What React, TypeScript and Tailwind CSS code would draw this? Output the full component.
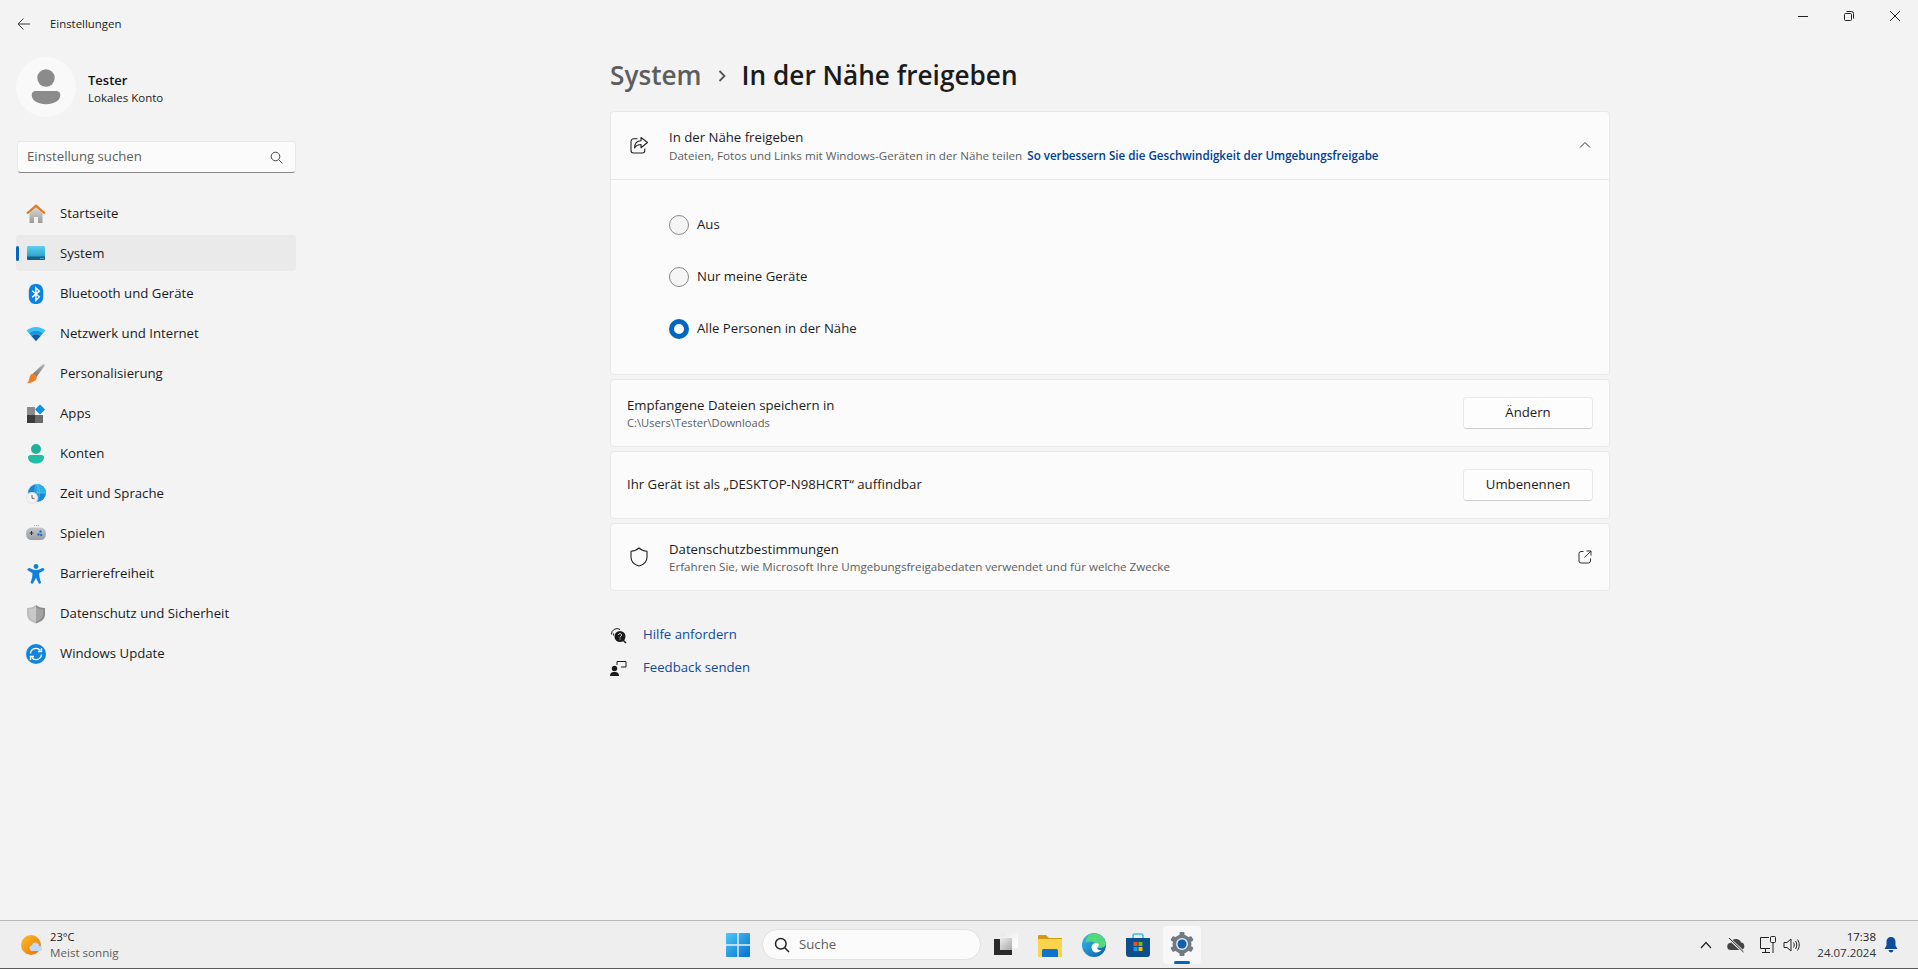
import { type ReactNode } from "react";

const Ico = ({ size = 20, children }: { size?: number; children: ReactNode }) => (
  <svg width={size} height={size} viewBox="0 0 20 20" fill="none" className="shrink-0">
    {children}
  </svg>
);

const HomeIcon = () => (
  <Ico>
    <defs>
      <linearGradient id="home" x1="0" y1="0" x2="0" y2="1">
        <stop offset="0" stopColor="#d8d8d8" />
        <stop offset="1" stopColor="#9a9a9a" />
      </linearGradient>
    </defs>
    <path d="M3.5 9 10 3.5 16.5 9v10H12v-6H8v6H3.5Z" fill="url(#home)" />
    <path d="M1 9.5 10 1.8l9 7.7" stroke="#e07a1f" strokeWidth="2.2" strokeLinejoin="miter" />
  </Ico>
);

const SystemIcon = () => (
  <Ico>
    <defs>
      <linearGradient id="sys" x1="0" y1="0" x2="0" y2="1">
        <stop offset="0" stopColor="#5cd0ee" />
        <stop offset="1" stopColor="#1b93bd" />
      </linearGradient>
    </defs>
    <rect x="1" y="2" width="18" height="14" rx="1.2" fill="url(#sys)" />
    <path d="M1 12.5h18v2.3a1.2 1.2 0 0 1-1.2 1.2H2.2A1.2 1.2 0 0 1 1 14.8Z" fill="#10628c" />
    <rect x="14.5" y="14" width="1" height="1" fill="#9fdcf0" />
    <rect x="16.5" y="14" width="1" height="1" fill="#9fdcf0" />
  </Ico>
);

const BluetoothIcon = () => (
  <Ico>
    <path d="M10 0c4.6 0 7.2 2.6 7.2 7.5v5c0 4.900-2.600 7.500-7.200 7.500s-7.200-2.600-7.200-7.500v-5C2.800 2.600 5.400 0 10 0Z" fill="#0a84e4" />
    <path d="m6.300 6.800 7 6-3.400 3.400V3.800l3.400 3.300-7 6" stroke="#fff" strokeWidth="1.4" />
  </Ico>
);

const WifiIcon = () => (
  <Ico>
    <path d="M.5 6.500C5.800 1.700 14.200 1.700 19.500 6.500L17 9.300C12.800 5.700 7.200 5.700 3 9.300Z" fill="#39c2f3" />
    <path d="M3 9.300c4.200-3.600 9.800-3.600 14 0l-2.400 2.700c-2.800-2.200-6.400-2.200-9.200 0Z" fill="#1296e6" />
    <path d="M5.400 12c2.800-2.200 6.400-2.200 9.200 0L10 17.200Z" fill="#0a5cac" />
  </Ico>
);

const BrushIcon = () => (
  <Ico>
    <defs>
      <linearGradient id="brush" x1="0" y1="1" x2="1" y2="0">
        <stop offset="0" stopColor="#6f6f6f" />
        <stop offset="1" stopColor="#b9b9b9" />
      </linearGradient>
    </defs>
    <path d="M7 9.500 17 .3c.9-.6 2.200.5 1.700 1.500L10.500 13Z" fill="url(#brush)" />
    <path d="M6.500 9.800c2 0 4 1.600 4.300 3.400.1 3.300-4.800 5.800-10.300 6 2.600-1.200 2.400-3.200 3.100-5.600.5-2 1.500-3.800 2.900-3.800Z" fill="#ef7e24" />
  </Ico>
);

const AppsIcon = () => (
  <Ico>
    <rect x="1" y="3" width="8" height="8" fill="#8a8a8a" />
    <rect x="1" y="11" width="8" height="8" fill="#3c3c3c" />
    <rect x="9" y="11" width="8" height="8" fill="#6a6a6a" />
    <path d="m14 .5 5 5-5 5-5-5Z" fill="#0c8fe6" />
  </Ico>
);

const AccountIcon = () => (
  <Ico>
    <circle cx="10" cy="5" r="5" fill="#21b09b" />
    <path d="M2 13.500c0-1.400 1-2.500 2.500-2.500h11c1.500 0 2.500 1.100 2.500 2.500 0 3.700-3.500 6-8 6s-8-2.300-8-6Z" fill="#1fbfa6" />
  </Ico>
);

const TimeIcon = () => (
  <Ico>
    <circle cx="11" cy="9" r="9" fill="#1489d8" />
    <path d="M11 0a9 9 0 0 1 9 9h-9Z" fill="#28aee8" />
    <path d="M2 9h18M11 0v18M11 0c-3 3-3 15 0 18M11 0c3 3 3 15 0 18" stroke="#73cdf2" strokeWidth=".6" />
    <circle cx="6" cy="14" r="6" fill="#e4e4e4" />
    <circle cx="6" cy="14" r="4.8" fill="#f4f4f4" />
    <path d="M6 11v3.300h2.500" stroke="#555" strokeWidth=".9" />
  </Ico>
);

const GameIcon = () => (
  <Ico>
    <defs>
      <linearGradient id="pad" x1="0" y1="0" x2="0" y2="1">
        <stop offset="0" stopColor="#c3c7cc" />
        <stop offset="1" stopColor="#9b9fa5" />
      </linearGradient>
    </defs>
    <rect x="0" y="3.5" width="20" height="12.5" rx="5.5" fill="url(#pad)" />
    <path d="M3.500 9h4M5.500 7v4" stroke="#333" strokeWidth="1" />
    <circle cx="14.5" cy="7.5" r="1.2" fill="#1d6fc4" />
    <circle cx="12.5" cy="10.5" r="1.2" fill="#1d6fc4" />
    <circle cx="15.2" cy="11" r="1.2" fill="#1d6fc4" />
    <path d="M8 1.500h.8M10.200 1.500h.8M12.200 1.500h.8" stroke="#8a8a8a" strokeWidth=".9" />
  </Ico>
);

const AccessIcon = () => (
  <Ico>
    <circle cx="10" cy="2.5" r="2.4" fill="#1180dc" />
    <path d="M2 4.500c.8-.8 1.500-.7 2.200-.2 3.400 2.400 8.200 2.400 11.600 0 .7-.5 1.400-.6 2.200.2.600.7.400 1.500-.3 2-1.700 1.300-3.400 2-4.400 2.400-.2 3.400.6 6.500 1.700 9.300.4 1.300-1.500 2.200-2.300 1L10 13.900 7 19.200c-.8 1.200-2.700.3-2.300-1 1.100-2.800 1.900-5.900 1.700-9.300-1-.4-2.700-1.100-4.400-2.400-.7-.5-.9-1.300 0-2Z" fill="#1180dc" />
  </Ico>
);

const ShieldIcon = () => (
  <Ico>
    <path d="M10 1C7.500 3 5 3.800 1 4v6.500C1 15 5 18 10 19.500Z" fill="#bcbcbc" />
    <path d="M10 1c2.500 2 5 2.800 9 3v6.500C19 15 15 18 10 19.500Z" fill="#8c8c8c" />
    <path d="M10 3C8 4.500 5.800 5.300 3 5.500v5c0 3.400 2.800 5.800 7 7.200 4.200-1.400 7-3.800 7-7.200v-5C14.200 5.300 12 4.500 10 3Z" fill="#fff" opacity=".2" />
  </Ico>
);

const UpdateIcon = () => (
  <Ico>
    <circle cx="10" cy="10" r="10" fill="#1284dc" />
    <path d="M4.500 9.500A5.500 5.500 0 0 1 14.300 6.500M15.500 10.500A5.500 5.500 0 0 1 5.700 13.500" stroke="#fff" strokeWidth="1.3" />
    <path d="M15.500 4v3.500H12M4.500 16v-3.500H8" stroke="#fff" strokeWidth="1.3" />
  </Ico>
);

const navItems = [
  { label: "Startseite", icon: <HomeIcon /> },
  { label: "System", icon: <SystemIcon />, active: true },
  { label: "Bluetooth und Geräte", icon: <BluetoothIcon /> },
  { label: "Netzwerk und Internet", icon: <WifiIcon /> },
  { label: "Personalisierung", icon: <BrushIcon /> },
  { label: "Apps", icon: <AppsIcon /> },
  { label: "Konten", icon: <AccountIcon /> },
  { label: "Zeit und Sprache", icon: <TimeIcon /> },
  { label: "Spielen", icon: <GameIcon /> },
  { label: "Barrierefreiheit", icon: <AccessIcon /> },
  { label: "Datenschutz und Sicherheit", icon: <ShieldIcon /> },
  { label: "Windows Update", icon: <UpdateIcon /> },
];

const Sidebar = () => (
  <aside className="w-[312px] shrink-0 pl-4 pr-4">
    <div className="flex h-12 items-center">
      <svg width="14" height="14" viewBox="0 0 14 14" fill="none" stroke="#3a3a3a" strokeWidth="1" className="ml-[1px]">
        <path d="M13 7H1M6.500 1.500 1 7l5.500 5.500" />
      </svg>
      <span className="ml-[19px] text-[11.4px] text-[#1b1b1b]">Einstellungen</span>
    </div>
    <div className="mt-[9px] flex h-[60px] items-center">
      <div className="flex h-[60px] w-[60px] items-center justify-center rounded-full bg-[#f9f9f9]">
        <svg width="30" height="36" viewBox="0 0 30 36" fill="#8b8b8b">
          <circle cx="15" cy="9" r="8.7" />
          <path d="M.700 26c0-2.400 1.800-4 4-4h20.600c2.200 0 4 1.600 4 4 0 5.800-6.500 9.200-14.300 9.200S.700 31.800.700 26Z" />
        </svg>
      </div>
      <div className="ml-3 mt-[2px] flex flex-col">
        <span className="text-[13px] font-semibold leading-[20px] text-[#111]">Tester</span>
        <span className="text-[11.5px] leading-[16px] text-[#1b1b1b]">Lokales Konto</span>
      </div>
    </div>
    <div className="ml-[1px] mt-6 flex h-8 w-[279px] items-center justify-between rounded-[4px] border border-[#e8e8e8] border-b-[#868686] bg-[#fbfbfb] pl-[9px] pr-[12px]">
      <span className="text-[13.2px] text-[#5d5d5d]">Einstellung suchen</span>
      <svg width="13" height="13" viewBox="0 0 13 13" fill="none" stroke="#444" strokeWidth="1">
        <circle cx="5.5" cy="5.5" r="4.3" />
        <path d="m8.600 8.600 3.800 3.800" />
      </svg>
    </div>
    <nav className="mt-[22px] flex flex-col gap-1">
      {navItems.map((item) => (
        <div
          key={item.label}
          className={`relative flex h-9 w-[280px] items-center rounded-[4px] pl-[10px] pt-[2px] ${item.active ? "bg-[#eaeaea]" : ""}`}
        >
          {item.active && <div className="absolute left-0 top-[11px] h-[15px] w-[3px] rounded-full bg-[#0067c0]" />}
          {item.icon}
          <span className="ml-[14px] text-[13.2px] text-[#1b1b1b]">{item.label}</span>
        </div>
      ))}
    </nav>
  </aside>
);

const Radio = ({ label, checked }: { label: string; checked?: boolean }) => (
  <div className="flex h-5 items-center">
    {checked ? (
      <div className="h-5 w-5 rounded-full border-[5px] border-[#0067c0] bg-white" />
    ) : (
      <div className="h-5 w-5 rounded-full border border-[#8a8a8a] bg-[#f5f5f5]" />
    )}
    <span className="ml-2 text-[13.2px] text-[#1b1b1b]">{label}</span>
  </div>
);

const Card = ({ children }: { children: ReactNode }) => (
  <div className="flex h-[68px] items-center justify-between rounded-[4px] border border-[#e8e8e8] bg-[#fbfbfb] pr-[16px]">
    {children}
  </div>
);

const ActionButton = ({ label }: { label: string }) => (
  <button className="h-8 w-[130px] rounded-[4px] border border-[#e8e8e8] border-b-[#cdcdcd] bg-[#fdfdfd] text-[13.2px] text-[#1b1b1b]">
    {label}
  </button>
);

const Content = () => (
  <main className="flex-1 pl-[298px]">
    <div className="w-[1000px]">
      <h1 className="flex h-[111px] items-center pt-[40px] text-[26.2px] font-semibold leading-none">
        <span className="text-[#5d5d5d]">System</span>
        <svg width="10" height="14" viewBox="0 0 10 14" fill="none" stroke="#555" strokeWidth="1.8" className="mx-[15px]">
          <path d="m2.500 2 5 5-5 5" />
        </svg>
        <span className="text-[#1b1b1b]">In der Nähe freigeben</span>
      </h1>

      <div className="flex flex-col gap-1">
        <div className="h-[264px] rounded-[4px] border border-[#e8e8e8] bg-[#fbfbfb]">
          <div className="flex h-[68px] items-center border-b border-[#e8e8e8] pb-[1px] pl-[18px] pr-[17px]">
            <svg width="20" height="20" viewBox="0 0 20 20" fill="none" stroke="#222" strokeWidth="1.1" className="shrink-0">
              <path d="M8.500 3.800H4.500A2.500 2.500 0 0 0 2 6.300v9.200A2.500 2.500 0 0 0 4.500 18h8.800a2.500 2.500 0 0 0 2.500-2.500V13.500" />
              <path d="M12 2.500v3.200C8 5.800 5.600 8.300 5.600 13c1.500-2.500 3.600-3.500 6.400-3.500v3.200L18.500 7.500Z" strokeLinejoin="round" />
            </svg>
            <div className="ml-[20px] flex flex-1 flex-col">
              <span className="text-[13.2px] leading-[20px] text-[#1b1b1b]">In der Nähe freigeben</span>
              <span className="text-[11.62px] leading-[17px] text-[#5d5d5d]">
                Dateien, Fotos und Links mit Windows-Geräten in der Nähe teilen
                <a className="ml-[5px] font-semibold text-[#003e92]">So verbessern Sie die Geschwindigkeit der Umgebungsfreigabe</a>
              </span>
            </div>
            <svg width="14" height="14" viewBox="0 0 14 14" fill="none" stroke="#333" strokeWidth="1">
              <path d="m2 9.500 5-5 5 5" />
            </svg>
          </div>
          <div className="flex flex-col gap-8 pl-[58px] pt-[35px]">
            <Radio label="Aus" />
            <Radio label="Nur meine Geräte" />
            <Radio label="Alle Personen in der Nähe" checked />
          </div>
        </div>

        <Card>
          <div className="flex flex-col pl-4">
            <span className="text-[13.2px] leading-[20px] text-[#1b1b1b]">Empfangene Dateien speichern in</span>
            <span className="text-[11.2px] leading-[16px] text-[#5d5d5d]">C:\Users\Tester\Downloads</span>
          </div>
          <ActionButton label="Ändern" />
        </Card>

        <Card>
          <span className="pl-4 text-[13.2px] text-[#1b1b1b]">Ihr Gerät ist als „DESKTOP-N98HCRT“ auffindbar</span>
          <ActionButton label="Umbenennen" />
        </Card>

        <Card>
          <div className="flex items-center pl-[18px]">
            <svg width="20" height="20" viewBox="0 0 20 20" fill="none" stroke="#222" strokeWidth="1.1" className="shrink-0">
              <path d="M10 1C8 3 5.500 4 2 4.200v6C2 14.500 5 17.500 10 19c5-1.500 8-4.500 8-8.800v-6C14.500 4 12 3 10 1Z" strokeLinejoin="round" />
            </svg>
            <div className="ml-[20px] flex flex-col">
              <span className="text-[13.2px] leading-[20px] text-[#1b1b1b]">Datenschutzbestimmungen</span>
              <span className="text-[11.62px] leading-[16px] text-[#5d5d5d]">
                Erfahren Sie, wie Microsoft Ihre Umgebungsfreigabedaten verwendet und für welche Zwecke
              </span>
            </div>
          </div>
          <svg width="14" height="14" viewBox="0 0 14 14" fill="none" stroke="#333" strokeWidth="1" className="mr-[1px]">
            <path d="M5.500 1.500H3A2 2 0 0 0 1 3.500v7.500a2 2 0 0 0 2 2h7.500a2 2 0 0 0 2-2V8.500M8.500 1H13v4.500M13 1 6.500 7.500" />
          </svg>
        </Card>
      </div>

      <div className="mt-[34px] flex flex-col gap-[13px]">
        <div className="flex h-5 items-center">
          <svg width="17" height="17" viewBox="0 0 17 17" className="shrink-0">
            <path d="M1.500 7.500A5.500 5.500 0 0 1 10 2.500M3.500 8.500v-2" fill="none" stroke="#1b1b1b" strokeWidth="1" />
            <circle cx="10" cy="9.5" r="5.5" fill="#1b1b1b" />
            <path d="m13 13 3 3" stroke="#1b1b1b" strokeWidth="1.5" />
            <path d="M8.500 8a1.500 1.500 0 1 1 2.300 1.300c-.6.400-.8.700-.8 1.200" fill="none" stroke="#fff" strokeWidth=".9" />
            <circle cx="10" cy="12" r=".6" fill="#fff" />
          </svg>
          <a className="ml-[16px] text-[13.2px] text-[#0f4a9c]">Hilfe anfordern</a>
        </div>
        <div className="flex h-5 items-center">
          <svg width="17" height="17" viewBox="0 0 17 17" className="shrink-0">
            <circle cx="4.5" cy="8.5" r="2.7" fill="#1b1b1b" />
            <path d="M0 16c0-2.500 1.500-4 3.500-4h2C7.500 12 9 13.500 9 16Z" fill="#1b1b1b" />
            <path d="M7 5V1.500h9V7h-5" fill="none" stroke="#1b1b1b" strokeWidth="1" />
          </svg>
          <a className="ml-[16px] text-[13.2px] text-[#0f4a9c]">Feedback senden</a>
        </div>
      </div>
    </div>
  </main>
);

const WindowControls = () => (
  <div className="absolute right-0 top-0 flex h-8 items-center">
    <div className="flex h-8 w-[46px] items-center justify-center">
      <svg width="10" height="10" viewBox="0 0 10 10" stroke="#222" strokeWidth="1"><path d="M0 5.500h10" /></svg>
    </div>
    <div className="flex h-8 w-[46px] items-center justify-center">
      <svg width="10" height="10" viewBox="0 0 10 10" fill="none" stroke="#222" strokeWidth="1">
        <rect x=".5" y="2.5" width="7" height="7" rx="1" />
        <path d="M2.500 .5h5a2 2 0 0 1 2 2v5" />
      </svg>
    </div>
    <div className="flex h-8 w-[46px] items-center justify-center">
      <svg width="10" height="10" viewBox="0 0 10 10" stroke="#222" strokeWidth="1"><path d="m0 0 10 10M10 0 0 10" /></svg>
    </div>
  </div>
);

const TaskbarCenter = () => (
  <div className="flex items-center">
    <svg width="24" height="24" viewBox="0 0 24 24" className="shrink-0">
      <defs>
        <linearGradient id="win" x1="0" y1="0" x2="1" y2="1">
          <stop offset="0" stopColor="#4cc8f8" />
          <stop offset="1" stopColor="#0670d0" />
        </linearGradient>
      </defs>
      <path d="M0 1a1 1 0 0 1 1-1h10.300v11.300H0ZM12.700 0H23a1 1 0 0 1 1 1v10.300H12.700ZM0 12.700h11.300V24H1a1 1 0 0 1-1-1ZM12.700 12.700H24V23a1 1 0 0 1-1 1H12.700Z" fill="url(#win)" />
    </svg>
    <div className="ml-[12px] flex h-[31px] w-[219px] items-center rounded-full border border-[#e2e2e2] bg-[#fbfbfb] pl-[11px]">
      <svg width="16" height="16" viewBox="0 0 16 16" fill="none" stroke="#222" strokeWidth="1.5">
        <circle cx="6.8" cy="6.8" r="5.3" />
        <path d="m10.700 10.700 4.300 4.300" />
      </svg>
      <span className="ml-[9px] text-[13.2px] text-[#5d5d5d]">Suche</span>
    </div>
    <svg width="24" height="24" viewBox="0 0 24 24" className="ml-[13px] shrink-0">
      <defs>
        <linearGradient id="tv1" x1="0" y1="0" x2="1" y2="1">
          <stop offset="0" stopColor="#e9e9e9" />
          <stop offset="1" stopColor="#ffffff" />
        </linearGradient>
        <linearGradient id="tv2" x1="0" y1="0" x2="1" y2="1">
          <stop offset="0" stopColor="#eeeeee" />
          <stop offset="1" stopColor="#a8a8a8" />
        </linearGradient>
      </defs>
      <rect x="7" y="0" width="17" height="15" fill="url(#tv1)" />
      <rect x="0" y="6" width="18" height="16" fill="#2a2a2a" />
      <rect x="6" y="5" width="12" height="12" fill="url(#tv2)" />
    </svg>
    <svg width="24" height="24" viewBox="0 0 24 24" className="ml-5 shrink-0">
      <path d="M0 3a1 1 0 0 1 1-1h7l3 3h13v4H0Z" fill="#d39a10" />
      <path d="M0 6h24v17a1 1 0 0 1-1 1H1a1 1 0 0 1-1-1Z" fill="#fbd34c" />
      <path d="M4 17.500a1.500 1.500 0 0 1 1.500-1.500h13a1.500 1.500 0 0 1 1.500 1.500V24H4Z" fill="#0f74c8" />
    </svg>
    <svg width="24" height="24" viewBox="0 0 24 24" className="ml-5 shrink-0">
      <defs>
        <linearGradient id="edge" x1="0" y1="0" x2="1" y2="1">
          <stop offset="0" stopColor="#35c1f1" />
          <stop offset="1" stopColor="#0c59a4" />
        </linearGradient>
      </defs>
      <circle cx="12" cy="12" r="12" fill="url(#edge)" />
      <path d="M7 2C11 -1 21 -.5 24 10c.3 3.500-3 5-6 5-2.500 0-4-.8-4.500-2.500C14 10 10 7 4 9.500 3.800 6 5 4 7 2Z" fill="#52d87d" />
      <path d="M9.500 14c0-3 3-4.500 5.500-4 2 .5 2.500 2.500 1 3.800-1.500 1.500-.5 3.600 3.500 3.200-3.500 3.800-9.500 3.500-10-3Z" fill="#fff" />
    </svg>
    <svg width="24" height="24" viewBox="0 0 24 24" className="ml-5 shrink-0">
      <path d="M7 6V3a2 2 0 0 1 2-2h6a2 2 0 0 1 2 2v3" fill="none" stroke="#38bdf0" strokeWidth="1.6" />
      <path d="M0 5h24v16a3 3 0 0 1-3 3H3a3 3 0 0 1-3-3Z" fill="#0d4f8a" />
      <rect x="7.5" y="9" width="4" height="4" fill="#f25022" />
      <rect x="12.5" y="9" width="4" height="4" fill="#7fba00" />
      <rect x="7.5" y="14" width="4" height="4" fill="#00a4ef" />
      <rect x="12.5" y="14" width="4" height="4" fill="#ffb900" />
    </svg>
    <div className="relative ml-[13px] flex h-[38px] w-[38px] items-center justify-center rounded-[4px] bg-[#f8f8f8]">
      <svg width="24" height="24" viewBox="0 0 24 24" className="-mt-[2px]">
        <g fill="#6f7a85">
          <rect x="9.5" y="0" width="5" height="24" rx="1" />
          <rect x="9.5" y="0" width="5" height="24" rx="1" transform="rotate(60 12 12)" />
          <rect x="9.5" y="0" width="5" height="24" rx="1" transform="rotate(120 12 12)" />
        </g>
        <circle cx="12" cy="12" r="9.5" fill="#6f7a85" />
        <circle cx="12" cy="12" r="6" fill="#dfe3e8" />
        <circle cx="12" cy="12" r="4.5" fill="#0f5fae" />
      </svg>
      <div className="absolute bottom-0 left-[11px] h-[3px] w-4 rounded-full bg-[#0067c0]" />
    </div>
  </div>
);

const Tray = () => (
  <div className="ml-auto flex items-center">
    <svg width="12" height="8" viewBox="0 0 12 8" fill="none" stroke="#222" strokeWidth="1.2">
      <path d="m1 7 5-5.500L11 7" />
    </svg>
    <svg width="18" height="16" viewBox="0 0 18 16" className="ml-[15px]">
      <path d="M4 13a3.500 3.500 0 0 1-.5-7C4 3.500 6.500 2 9 2s4.500 1.500 5 3.500a3.800 3.800 0 0 1 .3 7.500Z" fill="#444" />
      <path d="M2 1.500 16 14.500" stroke="#eee" strokeWidth="2.6" />
      <path d="M2 1 16.500 15" stroke="#222" strokeWidth="1" />
    </svg>
    <svg width="18" height="18" viewBox="0 0 18 18" fill="none" stroke="#222" strokeWidth="1" className="ml-[14px]">
      <path d="M10 1.500H1.500v11H11M6.500 12.500V16M3 16.500h8" />
      <rect x="11.5" y=".5" width="5" height="6" rx="1" />
      <path d="M14 7v10" />
    </svg>
    <svg width="17" height="16" viewBox="0 0 17 16" fill="none" stroke="#222" strokeWidth="1" className="ml-[6px]">
      <path d="M1 5.500h3L8 2v12l-4-3.500H1ZM10.500 5.500c1 1.500 1 3.500 0 5M12.500 4c1.700 2.500 1.700 5.500 0 8M14.500 2.500c2.300 3.300 2.300 7.700 0 11" />
    </svg>
    <div className="ml-[5px] flex w-[71px] flex-col items-end">
      <span className="text-[11.5px] leading-[16px] text-[#1b1b1b]">17:38</span>
      <span className="text-[11.5px] leading-[16px] text-[#333]">24.07.2024</span>
    </div>
    <svg width="14" height="16" viewBox="0 0 14 16" className="ml-[8px]">
      <path d="M7 0C4 0 2.500 2.300 2.500 5v3.500L.5 12h13l-2-3.500V5C11.500 2.300 10 0 7 0Z" fill="#0f4a9c" />
      <path d="M4.500 13h5a2.500 2.500 0 0 1-5 0Z" fill="#0f4a9c" />
    </svg>
  </div>
);

const Taskbar = () => (
  <footer className="flex h-[49px] shrink-0 items-center border-t border-b border-t-[#b9b9b9] border-b-[#5a5a5a] bg-[#eeeeee] pl-[21px] pr-[20px]">
    <div className="flex w-[705px] items-center">
      <svg width="20" height="20" viewBox="0 0 20 20" className="shrink-0 overflow-visible">
        <defs>
          <linearGradient id="sun" x1="0" y1="0" x2="1" y2="1">
            <stop offset="0" stopColor="#fbbf24" />
            <stop offset="1" stopColor="#e8700f" />
          </linearGradient>
        </defs>
        <circle cx="10" cy="10" r="10" fill="url(#sun)" />
        <g fill="#c6d9f2">
          <circle cx="11" cy="13" r="2.5" />
          <circle cx="14.5" cy="11" r="3.5" />
          <circle cx="18.5" cy="13.5" r="2.5" />
          <rect x="10" y="13" width="9" height="3" />
        </g>
      </svg>
      <div className="ml-[9px] flex flex-col">
        <span className="text-[11.2px] leading-[16px] text-[#1b1b1b]">23°C</span>
        <span className="text-[11.62px] leading-[16px] text-[#5d5d5d]">Meist sonnig</span>
      </div>
    </div>
    <TaskbarCenter />
    <Tray />
  </footer>
);

export default function App() {
  return (
    <div className="flex h-screen w-full flex-col overflow-hidden bg-[#f3f3f3] font-['Open_Sans',sans-serif]">
      <div className="relative flex min-h-0 flex-1">
        <Sidebar />
        <Content />
        <WindowControls />
      </div>
      <Taskbar />
    </div>
  );
}
